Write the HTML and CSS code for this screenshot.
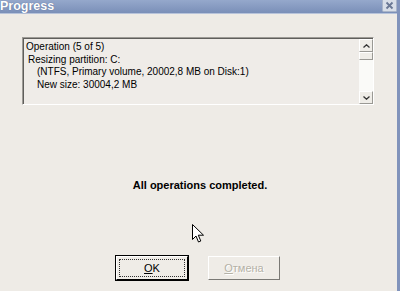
FILE: index.html
```html
<!DOCTYPE html>
<html lang="en">
<head>
    <meta charset="UTF-8">
    <title>Progress</title>
    <link rel="stylesheet" href="styles.css">
</head>
<body>
    <div class="window">
        <div class="titlebar">
            <span class="title">Progress</span>
            <span class="close">
                <svg width="9" height="9" viewBox="0 0 9 9">
                    <path d="M1.5 1.5 L7.5 7.5 M7.5 1.5 L1.5 7.5" stroke="#6a7894" stroke-width="1.8"/>
                </svg>
            </span>
        </div>
        <div class="content">
            <div class="log">
                <div class="log-text">
                    <div>Operation (5 of 5)</div>
                    <div class="indent1">Resizing partition: C:</div>
                    <div class="indent2">(NTFS, Primary volume, 20002,8 MB on Disk:1)</div>
                    <div class="indent2">New size: 30004,2 MB</div>
                </div>
                <div class="scrollbar">
                    <div class="sb-btn">
                        <svg width="7" height="4" viewBox="0 0 7 4"><path d="M0.5 3.5 L3.5 0.8 L6.5 3.5" fill="none" stroke="#333" stroke-width="1.3"/></svg>
                    </div>
                    <div class="sb-thumb"></div>
                    <div class="sb-track"></div>
                    <div class="sb-btn">
                        <svg width="7" height="4" viewBox="0 0 7 4"><path d="M0.5 0.5 L3.5 3.2 L6.5 0.5" fill="none" stroke="#333" stroke-width="1.3"/></svg>
                    </div>
                </div>
            </div>
            <div class="message">All operations completed.</div>
            <div class="buttons">
                <button class="btn default"><span class="focus"><u>O</u>K</span></button>
                <button class="btn disabled"><span><u>О</u>тмена</span></button>
            </div>
        </div>
        <svg class="cursor" width="13" height="20" viewBox="0 0 13 20">
            <path d="M0.5 0.5 L0.5 15.5 L4 12 L6.5 18 L8.8 17 L6.3 11.2 L11.5 11.2 Z" fill="#fff" stroke="#000" stroke-width="1"/>
        </svg>
    </div>
</body>
</html>
```

FILE: styles.css
```css
body {
    margin: 0;
    font-family: "Liberation Sans", Arial, sans-serif;
    font-size: 11px;
}
.window {
    position: relative;
    width: 400px;
    height: 291px;
    background: #eeebe6;
    border-right: 3px solid #8193bb;
    box-sizing: border-box;
    overflow: hidden;
}
.titlebar {
    height: 13px;
    background: linear-gradient(#95a8cb, #7a8fb8);
    border-bottom: 1px solid #b7c3da;
    display: flex;
    align-items: flex-start;
    justify-content: space-between;
}
.title {
    color: #fff;
    font-weight: bold;
    font-size: 12.5px;
    line-height: 12px;
    text-shadow: 0 0 1px #50608a;
}
.close {
    width: 13px;
    height: 11px;
    background: #d9dfe8;
    border: 1px solid #aab5c9;
    border-top: 0;
    border-radius: 0 0 2px 2px;
    display: flex;
    align-items: center;
    justify-content: center;
}
.content {
    padding: 23px 0 0 22px;
}
.log {
    width: 352px;
    height: 68px;
    box-sizing: border-box;
    border-top: 1px solid #9d9b96;
    border-left: 1px solid #9d9b96;
    border-right: 1px solid #ffffff;
    border-bottom: 1px solid #ffffff;
    display: flex;
}
.log-text {
    flex: 1;
    border-top: 1px solid #5f5e5b;
    border-left: 1px solid #5f5e5b;
    background: #efece8;
    padding: 2px 0 0 2px;
    font-size: 10px;
    line-height: 12.5px;
    color: #000;
}
.indent1 {
    padding-left: 2px;
}
.indent2 {
    padding-left: 11px;
}
.scrollbar {
    width: 14px;
    display: flex;
    flex-direction: column;
    border-top: 1px solid #5f5e5b;
    background: #fafaf8;
}
.sb-btn {
    height: 13px;
    box-sizing: border-box;
    background: #efede8;
    border: 1px solid #fff;
    border-right-color: #9a9994;
    border-bottom-color: #9a9994;
    display: flex;
    align-items: center;
    justify-content: center;
}
.sb-thumb {
    height: 8px;
    box-sizing: border-box;
    background: #efede8;
    border: 1px solid #fff;
    border-right-color: #9a9994;
    border-bottom-color: #9a9994;
}
.sb-track {
    flex: 1;
}
.message {
    width: 356px;
    margin-top: 74px;
    text-align: center;
    font-weight: bold;
    color: #000;
}
.buttons {
    display: flex;
    gap: 20px;
    margin: 65px 0 0 94px;
}
.btn {
    width: 72px;
    height: 24px;
    padding: 2px;
    background: #efece7;
    font-family: "Liberation Sans", Arial, sans-serif;
    font-size: 11px;
    border: 1px solid #fff;
    border-right-color: #7a7975;
    border-bottom-color: #7a7975;
    display: flex;
}
.btn span {
    flex: 1;
    display: flex;
    align-items: center;
    justify-content: center;
}
.btn.default {
    outline: 1px solid #000;
    outline-offset: 0;
    border-right-color: #000;
    border-bottom-color: #000;
    color: #000;
}
.btn .focus {
    border: 1px dotted #333;
}
.btn.disabled {
    color: #b4b1a6;
    text-shadow: 1px 1px 0 #fff;
}
.cursor {
    position: absolute;
    left: 192px;
    top: 224px;
}
```
